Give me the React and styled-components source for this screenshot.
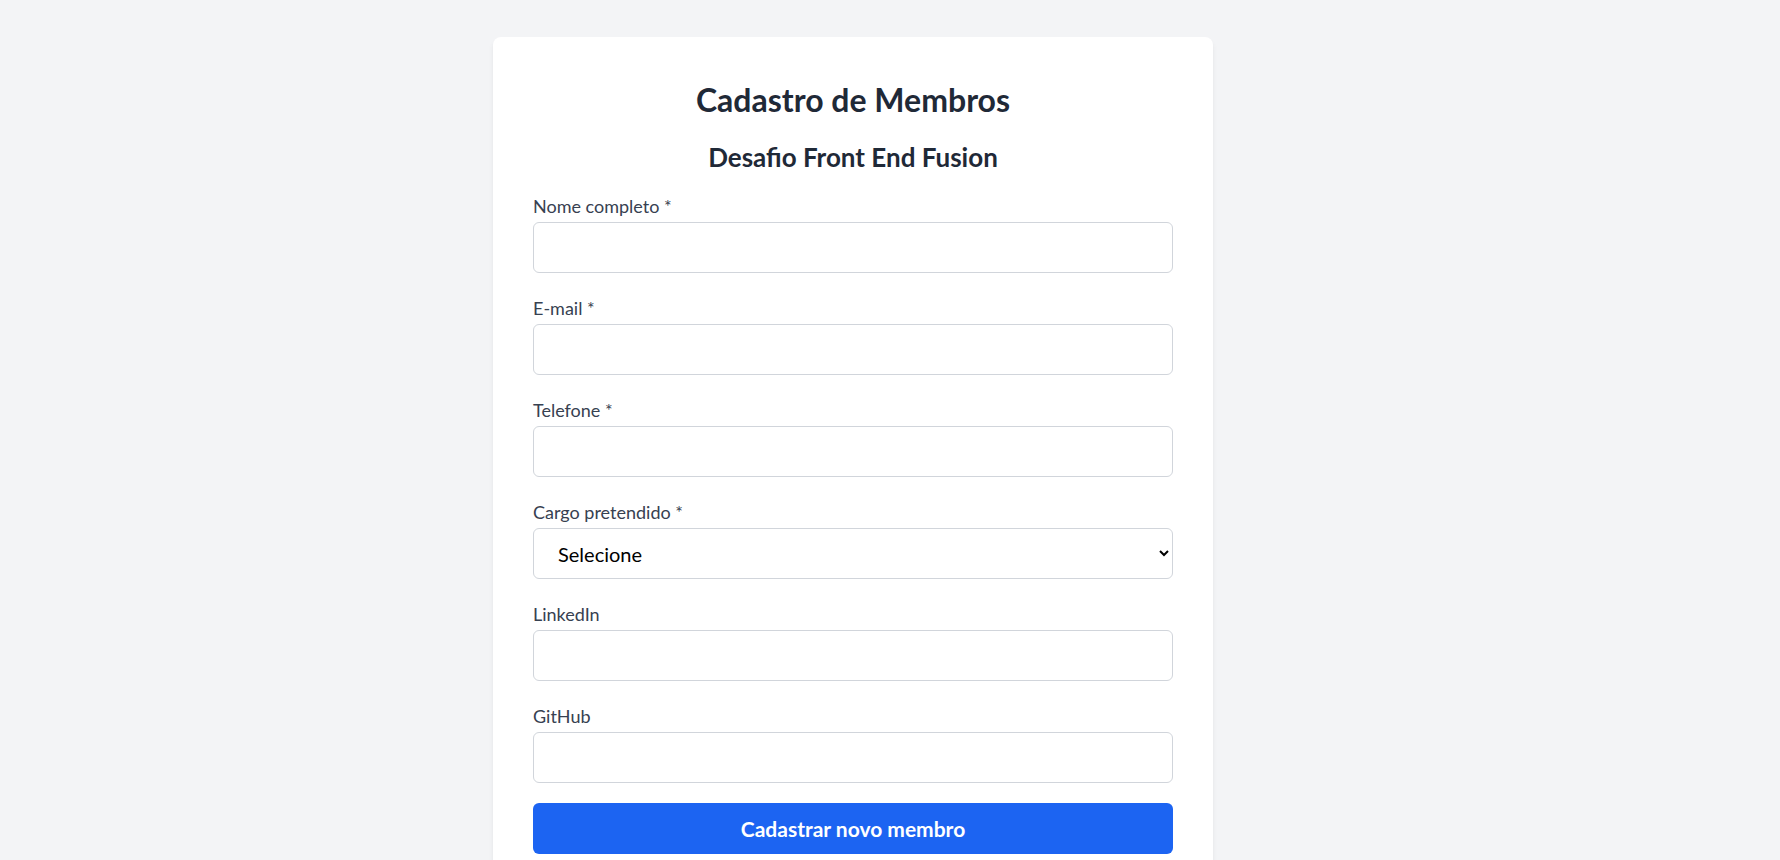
import styled, { createGlobalStyle } from 'styled-components'

const GlobalStyle = createGlobalStyle`
  html, body {
    margin: 0;
    padding: 0;
    background: #f3f4f6;
    font-family: Lato, "Noto Sans", sans-serif;
  }
`

const Page = styled.div`
  display: flex;
  justify-content: flex-start;
  padding: 37px 0 0 493px;
  min-height: 100vh;
  box-sizing: border-box;
`

const Card = styled.form`
  width: 720px;
  box-sizing: border-box;
  background: #ffffff;
  border-radius: 8px;
  box-shadow: 0 4px 6px -1px rgba(0, 0, 0, 0.08), 0 2px 4px -2px rgba(0, 0, 0, 0.06);
  padding: 45px 40px 40px;
  display: flex;
  flex-direction: column;
`

const Title = styled.h1`
  margin: 0;
  text-align: center;
  font-size: 32px;
  line-height: 36px;
  font-weight: 700;
  color: #1f2937;
`

const Subtitle = styled.h2`
  margin: 23px 0 0;
  text-align: center;
  font-size: 26px;
  line-height: 32px;
  font-weight: 700;
  color: #1f2937;
`

const Fields = styled.div`
  display: flex;
  flex-direction: column;
  gap: 23px;
  margin-top: 21px;
`

const Field = styled.div`
  display: flex;
  flex-direction: column;
  gap: 4px;
`

const Label = styled.label`
  font-size: 18px;
  line-height: 24px;
  color: #374151;
`

const Input = styled.input`
  box-sizing: border-box;
  height: 51px;
  width: 100%;
  border: 1px solid #d1d5db;
  border-radius: 6px;
  padding: 0 16px;
  font-family: inherit;
  font-size: 18px;
  background: #ffffff;
  &:focus {
    outline: none;
  }
`

const Select = styled.select`
  box-sizing: border-box;
  height: 51px;
  width: 100%;
  border: 1px solid #d1d5db;
  border-radius: 6px;
  padding: 0 12px 0 20px;
  font-family: inherit;
  font-size: 20px;
  color: #000000;
  background: #ffffff;
  &:focus {
    outline: none;
  }
`

const Button = styled.button`
  margin-top: -3px;
  height: 51px;
  width: 100%;
  border: none;
  border-radius: 6px;
  background: #1c64f2;
  color: #ffffff;
  font-family: inherit;
  font-size: 21px;
  font-weight: 700;
  cursor: pointer;
`

const fields = [
  { id: 'nome', label: 'Nome completo *', type: 'text' },
  { id: 'email', label: 'E-mail *', type: 'email' },
  { id: 'telefone', label: 'Telefone *', type: 'tel' },
  { id: 'cargo', label: 'Cargo pretendido *', select: true },
  { id: 'linkedin', label: 'LinkedIn', type: 'url' },
  { id: 'github', label: 'GitHub', type: 'url' },
]

export default function App() {
  return (
    <>
      <GlobalStyle />
      <Page>
        <Card onSubmit={(e) => e.preventDefault()}>
          <Title>Cadastro de Membros</Title>
          <Subtitle>Desafio Front End Fusion</Subtitle>
          <Fields>
            {fields.map((f) => (
              <Field key={f.id}>
                <Label htmlFor={f.id}>{f.label}</Label>
                {f.select ? (
                  <Select id={f.id} defaultValue="">
                    <option value="">Selecione</option>
                    <option value="frontend">Front End</option>
                    <option value="backend">Back End</option>
                    <option value="fullstack">Full Stack</option>
                  </Select>
                ) : (
                  <Input id={f.id} type={f.type} />
                )}
              </Field>
            ))}
            <Button type="submit">Cadastrar novo membro</Button>
          </Fields>
        </Card>
      </Page>
    </>
  )
}
